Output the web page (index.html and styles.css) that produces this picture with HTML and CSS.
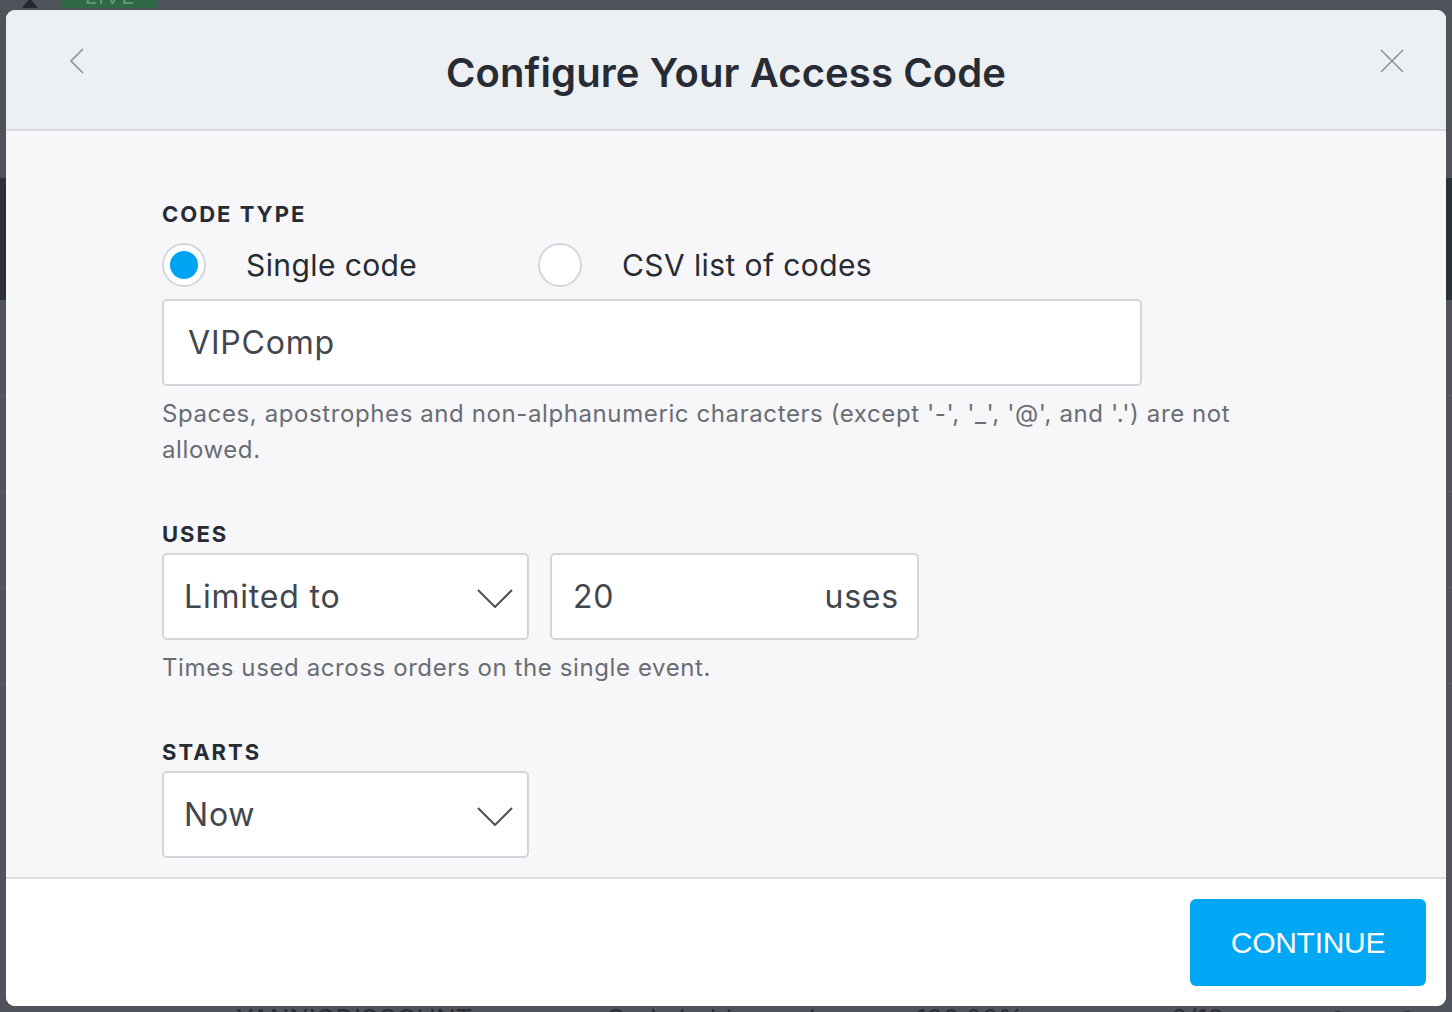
FILE: index.html
```html
<!DOCTYPE html>
<html lang="en">
<head>
<meta charset="utf-8">
<title>Configure Your Access Code</title>
<link rel="stylesheet" href="styles.css">
</head>
<body>
<div class="page">
  <div class="page-top">
    <span class="logo-mark"></span>
    <span class="live-badge">LIVE</span>
  </div>
  <div class="page-band"></div>
  <div class="page-rows">
    <div class="page-row"></div>
    <div class="page-row"></div>
    <div class="page-row"></div>
    <div class="page-row"></div>
  </div>
  <div class="page-bottom">
    <span class="pb-code">YANNIGDISCOUNT</span>
    <span class="pb-type">Code holders only</span>
    <span class="pb-pct">100.00%</span>
    <span class="pb-uses">0/10</span>
    <span class="pb-tix">Starter Start</span>
  </div>
</div>

<div class="modal" role="dialog" aria-labelledby="modal-title">
  <header class="modal-head">
    <button class="icon-btn back" aria-label="Back">
      <svg width="24" height="30" viewBox="0 0 24 30"><polyline points="17,3 5,15 17,27" fill="none" stroke="#8d9197" stroke-width="1.6"/></svg>
    </button>
    <h1 id="modal-title" class="modal-title">Configure Your Access Code</h1>
    <button class="icon-btn close" aria-label="Close">
      <svg width="26" height="26" viewBox="0 0 26 26"><path d="M2 2 L24 24 M24 2 L2 24" fill="none" stroke="#8d9197" stroke-width="1.6"/></svg>
    </button>
  </header>

  <div class="modal-body">
    <section class="field field-first">
      <div class="field-label">CODE TYPE</div>
      <div class="radio-row">
        <label class="radio">
          <span class="radio-dot checked"></span>
          <span class="radio-text">Single code</span>
        </label>
        <label class="radio">
          <span class="radio-dot"></span>
          <span class="radio-text">CSV list of codes</span>
        </label>
      </div>
      <div class="text-input wide">VIPComp</div>
      <p class="help">Spaces, apostrophes and non-alphanumeric characters (except '-', '_', '@', and '.') are not allowed.</p>
    </section>

    <section class="field">
      <div class="field-label">USES</div>
      <div class="input-row">
        <div class="select">
          <span>Limited to</span>
          <svg class="chev" width="36" height="20" viewBox="0 0 36 20"><polyline points="1,2 18,19 35,2" fill="none" stroke="#4b4f56" stroke-width="2"/></svg>
        </div>
        <div class="text-input uses">
          <span>20</span>
          <span class="suffix">uses</span>
        </div>
      </div>
      <p class="help">Times used across orders on the single event.</p>
    </section>

    <section class="field">
      <div class="field-label">STARTS</div>
      <div class="select">
        <span>Now</span>
        <svg class="chev" width="36" height="20" viewBox="0 0 36 20"><polyline points="1,2 18,19 35,2" fill="none" stroke="#4b4f56" stroke-width="2"/></svg>
      </div>
    </section>
  </div>

  <footer class="modal-foot">
    <button class="btn-primary">CONTINUE</button>
  </footer>
</div>
</body>
</html>
```

FILE: styles.css
```css
* { box-sizing: border-box; }

html, body {
  margin: 0;
  padding: 0;
  width: 1452px;
  height: 1012px;
  overflow: hidden;
}

body {
  background: #50535b;
  font-family: Inter, "Open Sans", "Liberation Sans", sans-serif;
  position: relative;
}

/* ---------- dimmed page behind the modal ---------- */
.page {
  height: 1012px;
  display: flex;
  flex-direction: column;
}

.page-top {
  height: 178px;
  display: flex;
  align-items: flex-start;
  padding-left: 22px;
  gap: 24px;
}

.logo-mark {
  width: 16px;
  height: 10px;
  margin-top: -2px;
  background: #25282f;
  clip-path: polygon(50% 0, 100% 100%, 0 100%);
}

.live-badge {
  margin-top: -16px;
  height: 24px;
  width: 96px;
  background: #2e6a45;
  color: #5d9b72;
  font-size: 22px;
  line-height: 24px;
  text-align: center;
  letter-spacing: 1px;
}

.page-band {
  height: 122px;
  background: #2c3039;
}

.page-rows {
  display: flex;
  flex-direction: column;
}

.page-row {
  height: 96px;
  border-bottom: 1px solid #5e6168;
}

.page-bottom {
  margin-top: auto;
  height: 8px;
  display: flex;
  align-items: flex-start;
  font-size: 26px;
  color: #2a2d34;
  line-height: 30px;
  overflow: hidden;
  white-space: nowrap;
}
.page-bottom span { display: block; }
.pb-code { margin-left: 236px; width: 370px; }
.pb-type { width: 310px; }
.pb-pct { width: 255px; }
.pb-uses { width: 160px; }
.pb-tix { font-size: 20px; }

/* ---------- modal ---------- */
.modal {
  position: absolute;
  top: 10px;
  left: 6px;
  width: 1440px;
  height: 996px;
  border-radius: 9px;
  overflow: hidden;
  display: flex;
  flex-direction: column;
  background: #f7f7f9;
}

.modal-head {
  flex: 0 0 121px;
  background: #edf0f3;
  border-bottom: 2px solid #d8dbdf;
  display: grid;
  grid-template-columns: 1fr auto 1fr;
  align-items: center;
  padding: 0 40px;
}

.icon-btn {
  background: none;
  border: 0;
  padding: 0;
  margin-top: -18px;
  display: flex;
}

.back { justify-self: start; margin-left: 20px; }
.close { justify-self: end; margin-right: 1px; }

.modal-title {
  margin: 6px 0 0;
  font-size: 40px;
  font-weight: 600;
  color: #272b33;
  letter-spacing: 0.1px;
}

.modal-body {
  flex: 1 1 auto;
  overflow: hidden;
  padding: 70px 156px 0;
}

.field { margin-top: 53px; }
.field-first { margin-top: 0; }

.field-label {
  font-size: 22px;
  line-height: 26px;
  font-weight: 700;
  color: #272b33;
  letter-spacing: 2px;
}

.radio-row {
  display: flex;
  margin-top: 16px;
  height: 44px;
  align-items: center;
}

.radio {
  display: flex;
  align-items: center;
  gap: 40px;
  width: 376px;
}

.radio-dot {
  width: 44px;
  height: 44px;
  border-radius: 50%;
  border: 2px solid #d3d6dd;
  background: #fff;
  display: flex;
  align-items: center;
  justify-content: center;
  flex: 0 0 auto;
}
.radio-dot.checked::after {
  content: "";
  width: 28px;
  height: 28px;
  border-radius: 50%;
  background: #00a4f3;
}

.radio-text {
  font-size: 30px;
  color: #272b33;
  letter-spacing: 0.4px;
}

.text-input, .select {
  background: #fff;
  border: 2px solid #d2d5dc;
  border-radius: 5px;
  height: 87px;
  display: flex;
  align-items: center;
  font-size: 32px;
  color: #42464d;
  letter-spacing: 0.8px;
}

.text-input.wide {
  margin-top: 12px;
  width: 980px;
  padding-left: 24px;
}

.help {
  margin: 10px 0 0;
  font-size: 24px;
  line-height: 36px;
  color: #696d74;
  letter-spacing: 0.6px;
  max-width: 1100px;
}

.input-row {
  display: flex;
  gap: 21px;
  margin-top: 6px;
}

.select {
  width: 367px;
  padding: 0 14px 0 20px;
  justify-content: space-between;
}

.field > .select { margin-top: 6px; }

.chev { margin-top: 2px; }

.text-input.uses {
  width: 369px;
  padding: 0 18px 0 21px;
  justify-content: space-between;
}

.modal-foot {
  flex: 0 0 129px;
  background: #fff;
  border-top: 2px solid #dfe0e4;
  display: flex;
  justify-content: flex-end;
  align-items: flex-start;
  padding: 20px 20px 0 0;
}

.btn-primary {
  width: 236px;
  height: 87px;
  border: 0;
  border-radius: 6px;
  background: #00a7f5;
  color: #fff;
  font-family: "Liberation Sans", Arial, sans-serif;
  font-size: 30px;
  letter-spacing: -0.3px;
}
```
